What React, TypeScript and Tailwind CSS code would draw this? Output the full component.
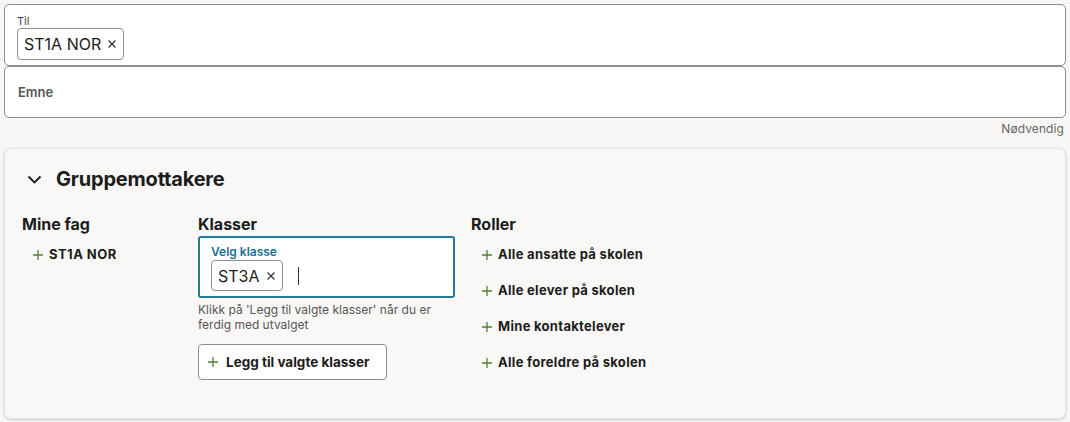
import React from "react";

const Plus = ({ className = "" }: { className?: string }) => (
  <svg width="12" height="12" viewBox="0 0 12 12" className={className} fill="none" stroke="#4f7f2f" strokeWidth="1.3">
    <path d="M6 1v10M1 6h10" />
  </svg>
);

const X = () => (
  <svg width="10" height="10" viewBox="0 0 10 10" fill="none" stroke="#333" strokeWidth="1.2">
    <path d="M1.5 1.5l7 7M8.5 1.5l-7 7" />
  </svg>
);

export default function App() {
  const roller = [
    "Alle ansatte på skolen",
    "Alle elever på skolen",
    "Mine kontaktelever",
    "Alle foreldre på skolen",
  ];
  return (
    <div className="min-h-screen bg-[#f8f7f5] px-1 pt-1 pb-1 text-[#1c1c1c] font-['Inter',sans-serif]">
      <div className="bg-white border border-[#8e8e8e] rounded-[5px] h-[62px] px-[12px] pt-[9px]">
        <div className="text-[11px] leading-[14px] text-[#444]">Til</div>
        <div className="inline-flex items-center gap-[6px] h-[32px] px-[6px] border border-[#8e8e8e] rounded-[4px] text-[16px]">
          <span>ST1A NOR</span>
          <X />
        </div>
      </div>
      <div className="bg-white border border-[#8e8e8e] rounded-[5px] h-[52px] px-[13px] pt-[1px] flex items-center">
        <span className="text-[13px] font-semibold text-[#555]">Emne</span>
      </div>
      <div className="text-right text-[12px] text-[#666] pt-[3px] pr-[2px] leading-[16px] tracking-[0.1px]">Nødvendig</div>
      <div className="mt-[11px] h-[271px] rounded-[7px] border border-[#e6e4e0] bg-[#f9f8f6] shadow-[0_1px_3px_rgba(0,0,0,0.18)] pl-[17px] pt-[17px]">
        <div className="flex items-center h-[26px]">
          <svg width="15" height="14" viewBox="0 0 15 14" className="ml-[5px]" fill="none" stroke="#1c1c1c" strokeWidth="1.9">
            <path d="M1.5 4.5l6 6 6-6" />
          </svg>
          <span className="ml-[14px] text-[20px] font-bold tracking-[-0.2px]">Gruppemottakere</span>
        </div>
        <div className="flex mt-[22px]">
          <div className="w-[176px]">
            <div className="text-[16px] font-bold leading-[20px]">Mine fag</div>
            <div className="flex items-center mt-[12px] pl-[10px] h-[18px]">
              <Plus />
              <span className="ml-[5px] text-[13px] font-bold tracking-[0.45px]">ST1A NOR</span>
            </div>
          </div>
          <div className="w-[273px]">
            <div className="text-[16px] font-bold leading-[20px]">Klasser</div>
            <div className="mt-[2px] w-[257px] h-[62px] bg-white border-2 border-[#1f7a9c] rounded-[3px] pl-[11px] pt-[6px]">
              <div className="text-[12px] font-semibold text-[#1b7093] leading-[16px]">Velg klasse</div>
              <div className="flex items-center">
                <div className="inline-flex items-center gap-[6px] h-[31px] px-[6px] border border-[#8e8e8e] rounded-[4px] text-[16px]">
                  <span>ST3A</span>
                  <X />
                </div>
                <div className="ml-[15px] w-[1.5px] h-[18px] bg-[#333]" />
              </div>
            </div>
            <div className="mt-[4px] text-[12px] leading-[15px] text-[#555] w-[250px]">
              Klikk på 'Legg til valgte klasser' når du er ferdig med utvalget
            </div>
            <button className="mt-[12px] h-[36px] w-[189px] bg-white border border-[#8e8e8e] rounded-[4px] flex items-center pl-[8px]">
              <Plus />
              <span className="ml-[7px] text-[13.5px] font-bold">Legg til valgte klasser</span>
            </button>
          </div>
          <div>
            <div className="text-[16px] font-bold leading-[20px]">Roller</div>
            <div className="mt-[12px] flex flex-col gap-[18px] pl-[10px]">
              {roller.map((r) => (
                <div key={r} className="flex items-center h-[18px]">
                  <Plus />
                  <span className="ml-[5px] text-[13px] font-bold tracking-[0.3px]">{r}</span>
                </div>
              ))}
            </div>
          </div>
        </div>
      </div>
    </div>
  );
}
